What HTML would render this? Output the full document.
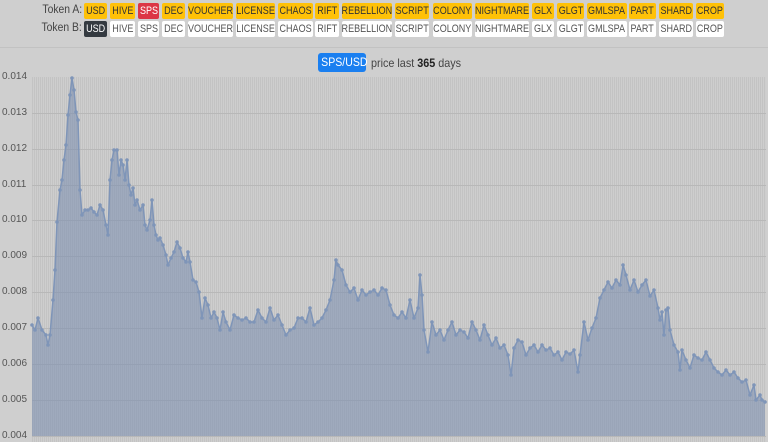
<!DOCTYPE html>
<html><head><meta charset="utf-8"><style>
body{margin:0;width:768px;height:442px;background:#cfcfcf;font-family:"Liberation Sans",sans-serif;overflow:hidden;position:relative}
.lbl{position:absolute;right:686px;font-size:11.5px;color:#444;white-space:nowrap;transform:scaleX(.9);transform-origin:right center}
.b{position:absolute;height:16px;line-height:16px;font-size:11px;text-align:center;border-radius:2px;color:#333;box-sizing:border-box;white-space:nowrap;overflow:visible}
.b span{display:inline-block;transform:scaleX(.82);transform-origin:center}
.b{display:flex;justify-content:center}
.a{background:#ffc107;top:3px}
.w{background:#fff;top:21px;color:#555}
.sep{position:absolute;left:0;right:0;top:47px;height:1px;background:#c2c2c2}
.yl{position:absolute;left:2px;font-size:10px;color:#555}
</style></head><body>
<div class="lbl" style="top:4px">Token A:</div>
<div class="lbl" style="top:22px">Token B:</div>
<div class="b a" style="left:84px;width:23px"><span>USD</span></div>
<div class="b a" style="left:110px;width:25px"><span>HIVE</span></div>
<div class="b a" style="left:138px;width:21px;background:#dc3545;color:#fff"><span>SPS</span></div>
<div class="b a" style="left:162px;width:23px"><span>DEC</span></div>
<div class="b a" style="left:188px;width:45px"><span>VOUCHER</span></div>
<div class="b a" style="left:236px;width:39px"><span>LICENSE</span></div>
<div class="b a" style="left:278px;width:35px"><span>CHAOS</span></div>
<div class="b a" style="left:315px;width:24px"><span>RIFT</span></div>
<div class="b a" style="left:342px;width:50px"><span>REBELLION</span></div>
<div class="b a" style="left:395px;width:34px"><span>SCRIPT</span></div>
<div class="b a" style="left:433px;width:39px"><span>COLONY</span></div>
<div class="b a" style="left:475px;width:54px"><span>NIGHTMARE</span></div>
<div class="b a" style="left:532px;width:22px"><span>GLX</span></div>
<div class="b a" style="left:557px;width:27px"><span>GLGT</span></div>
<div class="b a" style="left:587px;width:40px"><span>GMLSPA</span></div>
<div class="b a" style="left:629px;width:27px"><span>PART</span></div>
<div class="b a" style="left:659px;width:34px"><span>SHARD</span></div>
<div class="b a" style="left:696px;width:28px"><span>CROP</span></div>
<div class="b w" style="left:84px;width:23px;background:#343a40;color:#fff"><span>USD</span></div>
<div class="b w" style="left:110px;width:25px"><span>HIVE</span></div>
<div class="b w" style="left:138px;width:21px"><span>SPS</span></div>
<div class="b w" style="left:162px;width:23px"><span>DEC</span></div>
<div class="b w" style="left:188px;width:45px"><span>VOUCHER</span></div>
<div class="b w" style="left:236px;width:39px"><span>LICENSE</span></div>
<div class="b w" style="left:278px;width:35px"><span>CHAOS</span></div>
<div class="b w" style="left:315px;width:24px"><span>RIFT</span></div>
<div class="b w" style="left:342px;width:50px"><span>REBELLION</span></div>
<div class="b w" style="left:395px;width:34px"><span>SCRIPT</span></div>
<div class="b w" style="left:433px;width:39px"><span>COLONY</span></div>
<div class="b w" style="left:475px;width:54px"><span>NIGHTMARE</span></div>
<div class="b w" style="left:532px;width:22px"><span>GLX</span></div>
<div class="b w" style="left:557px;width:27px"><span>GLGT</span></div>
<div class="b w" style="left:587px;width:40px"><span>GMLSPA</span></div>
<div class="b w" style="left:629px;width:27px"><span>PART</span></div>
<div class="b w" style="left:659px;width:34px"><span>SHARD</span></div>
<div class="b w" style="left:696px;width:28px"><span>CROP</span></div>
<div class="sep"></div>
<div style="position:absolute;left:318px;top:53px;width:48px;height:19px;background:#1a7ff0;border-radius:3px;color:#fff;font-size:12px;line-height:19px;text-align:center"><span style="display:inline-block;transform:scaleX(.88)">SPS/USD</span></div>
<div style="position:absolute;left:371px;top:56px;font-size:12px;color:#444;transform:scaleX(.9);transform-origin:left;white-space:nowrap">price last <b style="color:#222">365</b> days</div>
<div style="position:absolute;left:32px;top:77px;width:734px;height:365px;background:repeating-linear-gradient(90deg,#c3c3c3 0,#c3c3c3 1px,#cecece 1px,#cecece 2px)"></div>
<div class="yl" style="top:71px">0.014</div><div class="yl" style="top:107px">0.013</div><div class="yl" style="top:143px">0.012</div><div class="yl" style="top:179px">0.011</div><div class="yl" style="top:214px">0.010</div><div class="yl" style="top:250px">0.009</div><div class="yl" style="top:286px">0.008</div><div class="yl" style="top:322px">0.007</div><div class="yl" style="top:358px">0.006</div><div class="yl" style="top:394px">0.005</div><div class="yl" style="top:430px">0.004</div>
<svg style="position:absolute;left:0;top:0" width="768" height="442">
<defs><marker id="m" markerWidth="6" markerHeight="6" refX="3" refY="3" markerUnits="userSpaceOnUse"><circle cx="3" cy="3" r="1.8" fill="#7f95b8"/></marker></defs>
<g stroke="#b8b8b8" stroke-width="1"><line x1="32" x2="766" y1="113.5" y2="113.5"/><line x1="32" x2="766" y1="149.5" y2="149.5"/><line x1="32" x2="766" y1="185.5" y2="185.5"/><line x1="32" x2="766" y1="220.5" y2="220.5"/><line x1="32" x2="766" y1="256.5" y2="256.5"/><line x1="32" x2="766" y1="292.5" y2="292.5"/><line x1="32" x2="766" y1="328.5" y2="328.5"/><line x1="32" x2="766" y1="364.5" y2="364.5"/><line x1="32" x2="766" y1="400.5" y2="400.5"/><line x1="32" x2="766" y1="436.5" y2="436.5"/></g>
<polygon fill="rgba(120,140,175,0.55)" points="32,436 32,325 35,330 38,318 42,330 46,335 48,345 50,335 53,300 55,270 57,222 60,190 62,180 64,160 66,145 68,115 70,95 72,78 74,90 76,112 78,120 80,190 82,215 85,210 88,210 91,208 94,212 97,215 100,205 103,210 106,225 108,235 110,180 112,160 114,150 117,150 119,175 121,160 123,165 125,180 127,160 129,185 131,195 133,188 135,205 137,200 140,210 143,205 145,225 147,230 150,220 152,200 154,225 156,235 158,240 160,238 163,245 166,255 168,265 171,258 174,252 177,242 180,248 183,258 186,262 188,252 190,262 193,280 196,282 199,292 202,318 205,298 208,305 211,318 214,312 217,318 220,330 223,312 226,322 230,330 234,315 238,318 242,320 246,318 250,322 254,322 258,310 262,318 266,322 270,308 274,320 278,315 282,325 286,335 290,330 294,328 298,318 302,318 306,322 310,308 314,325 318,322 322,318 326,310 330,300 334,280 336,260 338,265 342,270 346,285 350,292 354,288 358,300 362,290 366,295 370,292 374,290 378,295 382,288 386,290 390,305 394,315 398,318 402,312 406,318 410,300 414,318 418,308 420,275 422,295 424,330 428,352 432,322 436,335 440,330 444,340 448,330 452,322 456,335 460,330 464,332 468,338 472,322 476,330 480,340 484,325 488,335 492,345 496,338 500,348 504,345 508,355 511,375 514,348 518,340 522,342 526,355 530,348 534,345 538,352 542,345 546,350 550,348 554,355 558,352 562,360 566,352 570,354 574,350 578,372 580,355 584,322 588,340 592,328 596,318 600,298 604,290 608,282 612,288 616,280 620,285 623,265 626,275 630,290 634,280 638,292 642,285 646,280 650,296 654,290 658,308 660,320 662,312 664,335 666,310 668,308 670,330 674,345 678,352 680,370 682,350 686,360 690,368 694,355 698,358 702,360 706,352 710,360 714,368 718,372 722,375 726,370 730,375 734,372 738,378 742,382 746,380 750,395 754,385 756,400 760,395 762,400 765,402 765,436"/>
<polyline fill="none" stroke="#7f95b8" stroke-width="1.5" stroke-linejoin="round" marker-start="url(#m)" marker-mid="url(#m)" marker-end="url(#m)" points="32,325 35,330 38,318 42,330 46,335 48,345 50,335 53,300 55,270 57,222 60,190 62,180 64,160 66,145 68,115 70,95 72,78 74,90 76,112 78,120 80,190 82,215 85,210 88,210 91,208 94,212 97,215 100,205 103,210 106,225 108,235 110,180 112,160 114,150 117,150 119,175 121,160 123,165 125,180 127,160 129,185 131,195 133,188 135,205 137,200 140,210 143,205 145,225 147,230 150,220 152,200 154,225 156,235 158,240 160,238 163,245 166,255 168,265 171,258 174,252 177,242 180,248 183,258 186,262 188,252 190,262 193,280 196,282 199,292 202,318 205,298 208,305 211,318 214,312 217,318 220,330 223,312 226,322 230,330 234,315 238,318 242,320 246,318 250,322 254,322 258,310 262,318 266,322 270,308 274,320 278,315 282,325 286,335 290,330 294,328 298,318 302,318 306,322 310,308 314,325 318,322 322,318 326,310 330,300 334,280 336,260 338,265 342,270 346,285 350,292 354,288 358,300 362,290 366,295 370,292 374,290 378,295 382,288 386,290 390,305 394,315 398,318 402,312 406,318 410,300 414,318 418,308 420,275 422,295 424,330 428,352 432,322 436,335 440,330 444,340 448,330 452,322 456,335 460,330 464,332 468,338 472,322 476,330 480,340 484,325 488,335 492,345 496,338 500,348 504,345 508,355 511,375 514,348 518,340 522,342 526,355 530,348 534,345 538,352 542,345 546,350 550,348 554,355 558,352 562,360 566,352 570,354 574,350 578,372 580,355 584,322 588,340 592,328 596,318 600,298 604,290 608,282 612,288 616,280 620,285 623,265 626,275 630,290 634,280 638,292 642,285 646,280 650,296 654,290 658,308 660,320 662,312 664,335 666,310 668,308 670,330 674,345 678,352 680,370 682,350 686,360 690,368 694,355 698,358 702,360 706,352 710,360 714,368 718,372 722,375 726,370 730,375 734,372 738,378 742,382 746,380 750,395 754,385 756,400 760,395 762,400 765,402"/>
</svg>
</body></html>
